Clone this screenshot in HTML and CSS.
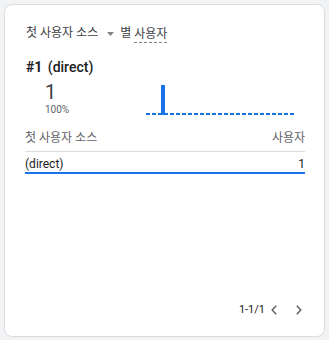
FILE: index.html
```html
<!DOCTYPE html>
<html lang="ko">
<head>
  <meta charset="UTF-8">
  <meta name="viewport" content="width=device-width, initial-scale=1.0">
  <title>첫 사용자 소스</title>
  <link rel="stylesheet" href="styles.css">
</head>
<body>
  <div class="card">
    <div class="card-title">
      <span>첫 사용자 소스</span>
      <svg class="caret" width="7" height="4" viewBox="0 0 7 4"><path d="M0 0 L7 0 L3.5 4 Z" fill="#80868b"/></svg>
      <span class="by">별</span>
      <span class="metric">사용자</span>
    </div>

    <div class="top-item">
      <div class="top-label"><b>#1</b> (direct)</div>
      <div class="top-body">
        <div class="top-value">
          <div class="big-number">1</div>
          <div class="percent">100%</div>
        </div>
        <div class="spark">
          <div class="spark-bar"></div>
        </div>
      </div>
    </div>

    <table class="data-table">
      <thead>
        <tr>
          <th>첫 사용자 소스</th>
          <th class="num">사용자</th>
        </tr>
      </thead>
      <tbody>
        <tr>
          <td>(direct)</td>
          <td class="num">1</td>
        </tr>
      </tbody>
    </table>

    <div class="pager">
      <span class="pager-count">1-1/1</span>
      <svg class="chev prev" width="6" height="10" viewBox="0 0 6 10"><path d="M5.2 0.8 L1.2 5 L5.2 9.2" fill="none" stroke="#5f6368" stroke-width="1.5"/></svg>
      <svg class="chev next" width="6" height="10" viewBox="0 0 6 10"><path d="M0.8 0.8 L4.8 5 L0.8 9.2" fill="none" stroke="#5f6368" stroke-width="1.5"/></svg>
    </div>
  </div>
</body>
</html>
```

FILE: styles.css
```css
body {
  margin: 0;
  padding: 4px;
  background-color: #f1f3f4;
  font-family: Roboto, "Noto Sans CJK KR", sans-serif;
  color: #3c4043;
}

.card {
  box-sizing: border-box;
  width: 321px;
  height: 333px;
  background-color: #fff;
  border: 1px solid #dadce0;
  border-radius: 8px;
  padding: 20px 19px 0 20px;
  display: flex;
  flex-direction: column;
}

/* title row: dimension + metric */
.card-title {
  display: flex;
  align-items: center;
  font-size: 12px;
  line-height: 16px;
  height: 16px;
  color: #3c4043;
  padding-left: 1px;
}

.card-title .caret {
  margin: 1px 6px 0 9px;
}

.metric {
  margin-left: 3px;
  border-bottom: 1px dashed #80868b;
  line-height: 16px;
  margin-top: 2px;
}

.top-item {
  margin-top: 17px;
  padding-left: 1px;
}

.top-label {
  font-size: 14px;
  line-height: 18px;
  font-weight: 500;
  color: #202124;
}

.top-label b {
  font-weight: 700;
  margin-right: 2px;
}

.top-body {
  display: flex;
  align-items: flex-start;
}

.top-value {
  width: 120px;
  padding-left: 19px;
  box-sizing: border-box;
}

.big-number {
  font-size: 20px;
  line-height: 24px;
  margin-top: 4px;
  color: #3c4043;
}

.percent {
  font-size: 10px;
  color: #5f6368;
  line-height: 14px;
  margin-top: -1px;
}

/* little bar chart with dashed baseline */
.spark {
  width: 149px;
  height: 30px;
  margin-top: 9px;
  position: relative;
  background-image: repeating-linear-gradient(to right, #1a73e8 0 4px, transparent 4px 6px);
  background-size: 100% 2px;
  background-position: left bottom;
  background-repeat: no-repeat;
}

.spark-bar {
  position: absolute;
  left: 15px;
  bottom: 0;
  width: 4px;
  height: 30px;
  background-color: #1a73e8;
}

.data-table {
  margin-top: 11px;
  width: 280px;
  border-collapse: collapse;
  font-size: 12px;
  line-height: 16px;
}

.data-table th {
  font-weight: 400;
  color: #5f6368;
  text-align: left;
  padding: 2px 0 5px 0;
  border-bottom: 1px solid #dadce0;
}

.data-table td {
  padding: 4px 0 0 0;
  color: #202124;
  border-bottom: 2px solid #1a73e8;
}

.data-table .num {
  text-align: right;
}

.pager {
  margin-top: auto;
  margin-bottom: 18px;
  display: flex;
  align-items: center;
  justify-content: flex-end;
  font-size: 11px;
  line-height: 16px;
  color: #202124;
}

.pager-count {
  margin-right: 6px;
}

.chev.prev {
  margin-right: 19px;
}

.chev.next {
  margin-right: 3px;
}
```
